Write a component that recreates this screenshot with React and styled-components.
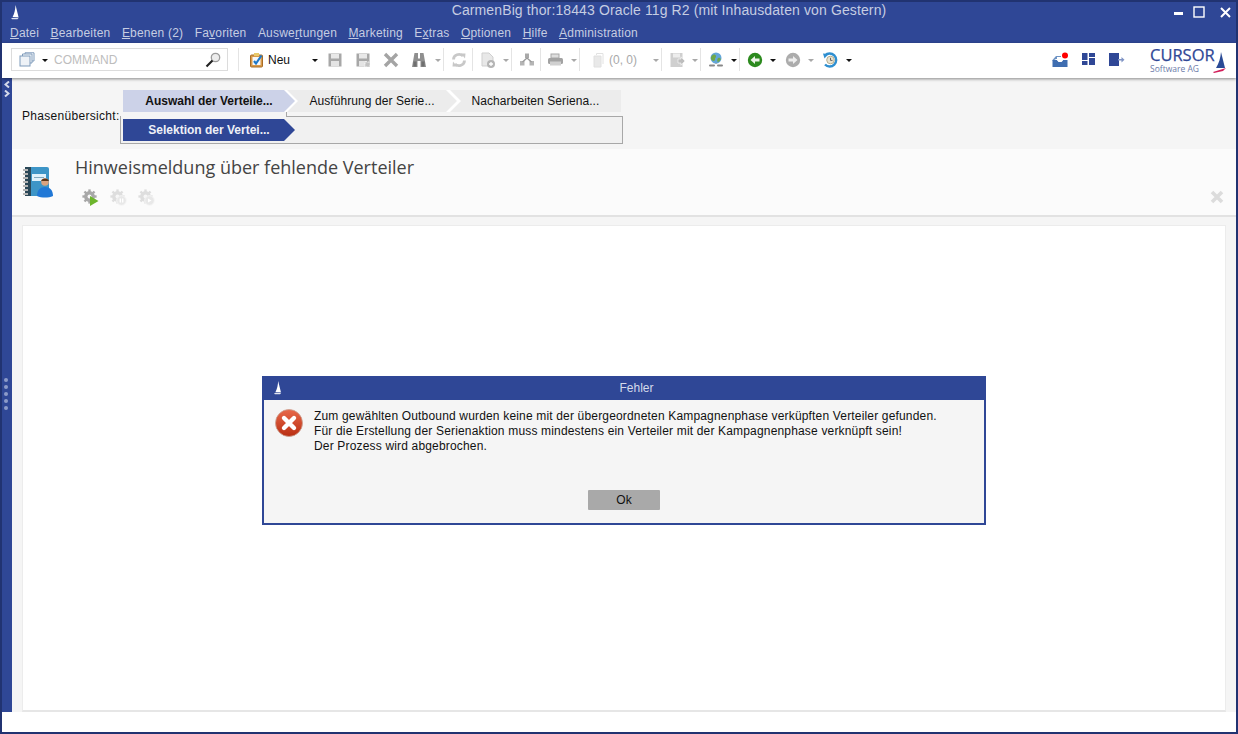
import React from "react";
import styled, { createGlobalStyle } from "styled-components";

const BLUE = "#2f4796";
const Global = createGlobalStyle`
  html, body { margin: 0; padding: 0; background: #fff; }
  body { font-family: "Liberation Sans", Arial, sans-serif; font-size: 12px; color: #111; }
  * { box-sizing: border-box; }
`;
const Frame = styled.div`
  position: relative; width: 1238px; height: 734px; overflow: hidden;
  border: 2px solid #213371; background: #fff; display: flex; flex-direction: column;
`;
const TitleBar = styled.div`
  height: 20px; background: ${BLUE}; display: flex; align-items: center; flex: none; position: relative;
`;
const SailSlot = styled.div`
  width: 26px; padding-left: 8px; display: flex; align-items: center; height: 100%; flex: none;
`;
const TitleText = styled.div`
  flex: 1; text-align: center; color: #c6cde2; font-size: 14px; letter-spacing: 0.12px; padding-left: 136px; padding-bottom: 5px; white-space: nowrap;
`;
const WinControls = styled.div`
  display: flex; align-items: center; padding-right: 5px; flex: none;
`;
const WinSlot = styled.div`
  margin-left: ${p => p.$ml}px; line-height: 0; flex: none;
`;
const MenuBar = styled.div`
  height: 21px; background: ${BLUE}; display: flex; align-items: center; gap: 11.4px; padding-left: 8px; flex: none; color: #c6cde2; font-size: 12px; letter-spacing: 0.2px;
`;
const MenuItem = styled.span``;
const Mn = styled.u``;
const Toolbar = styled.div`
  height: 35px; padding-bottom: 2px; background: #fff; display: flex; align-items: center; flex: none; position: relative; z-index: 2; box-shadow: 0 1px 3px rgba(0,0,0,.45);
`;
const CommandBox = styled.div`
  width: 217px; height: 23px; margin-left: 9px; border: 1px solid #dcdcdc; display: flex; align-items: center; padding-left: 7px; padding-right: 6px; color: #bdbdbd; flex: none;
`;
const CommandLabel = styled.span`
  flex: 1; margin-left: 6px; font-size: 12px;
`;
const Sep = styled.div`
  width: 1px; height: 23px; background: #e4e4e4; flex: none; margin-left: ${p => p.$ml}px;
`;
const Tool = styled.div`
  display: flex; align-items: center; flex: none; margin-left: ${p => p.$ml}px;
`;
const ToolText = styled.span`
  font-size: 12px; color: ${p => p.$muted ? "#a9a9a9" : "#111"}; margin-left: ${p => p.$ml}px;
`;
const Caret = styled.i`
  display: block; width: 0; height: 0; flex: none; margin-left: ${p => p.$ml}px; margin-top: 1px;
  border-left: 3px solid transparent; border-right: 3px solid transparent; border-top: 3px solid ${p => p.$light ? "#a8a8a8" : "#111"};
`;
const Spacer = styled.div`flex: 1;`;
const LogoBox = styled.div`
  width: 78px; margin: 0 8px 0 25px; position: relative; height: 29px; display: flex; flex-direction: column; flex: none;
`;
const LogoMain = styled.span`
  font-family: "Open Sans", sans-serif; font-size: 16.5px; color: ${BLUE}; line-height: 18px; margin-top: 1px; -webkit-text-stroke: .25px ${BLUE};
`;
const LogoSub = styled.span`
  font-family: "Open Sans", sans-serif; font-size: 8.5px; color: #6b7aa9; line-height: 10px;
`;
const LogoSail = styled.svg`
  position: absolute; right: 1px; top: 7px;
`;
const Body = styled.div`
  flex: 1; display: flex; min-height: 0;
`;
const Strip = styled.div`
  width: 10px; background: ${BLUE}; display: flex; flex-direction: column; align-items: center; position: relative; flex: none;
`;
const Chevrons = styled.div`
  padding-top: 3px; color: #d5daea; display: flex; flex-direction: column; gap: 2px;
`;
const GripDots = styled.div`
  position: absolute; top: 300px; display: flex; flex-direction: column; gap: 3px; left: 2px;
`;
const Dot = styled.i`
  display: block; width: 4px; height: 4px; border-radius: 50%; background: #8d9bc9;
`;
const Main = styled.div`
  flex: 1; display: flex; flex-direction: column; min-width: 0;
`;
const PhaseArea = styled.div`
  height: 71px; background: #f5f5f5; flex: none; display: flex; padding: 12px 0 0 10px;
`;
const PhaseLabel = styled.div`
  font-size: 12px; margin-top: 19px; width: 98px; flex: none; white-space: nowrap; letter-spacing: .3px;
`;
const PhaseCol = styled.div`
  display: flex; flex-direction: column; width: 503px; position: relative;
`;
const TabRow = styled.div`
  display: flex; height: 22px; width: 498px; margin-left: 3px; position: relative; z-index: 1; background: #fff;
`;
const Chevron = styled.div`
  height: 22px; width: ${p => p.$w}px; margin-left: ${p => p.$ml || 0}px; flex: none; display: flex; align-items: center; justify-content: center;
  font-size: 12px; background: ${p => p.$bg}; color: ${p => p.$fg}; font-weight: ${p => p.$bold ? 700 : 400}; letter-spacing: ${p => p.$bold ? 0 : 0.08}px;
  clip-path: ${p => p.$first
    ? "polygon(0 0, calc(100% - 11px) 0, 100% 50%, calc(100% - 11px) 100%, 0 100%)"
    : p.$last
      ? "polygon(0 0, 100% 0, 100% 100%, 0 100%, 11px 50%)"
      : "polygon(0 0, calc(100% - 11px) 0, 100% 50%, calc(100% - 11px) 100%, 0 100%, 11px 50%)"};
`;
const SubPanel = styled.div`
  height: 28px; margin-top: 4px; border: 1px solid #a8a8a8; background: #f1f1f1; position: relative; padding: 2px 0 0 2px;
  &::before { content: ""; position: absolute; left: 0; top: -1px; width: 165px; height: 3px; background: #f5f5f5; }
  &::after { content: ""; position: absolute; left: 165px; top: -6px; width: 1px; height: 6px; background: #a8a8a8; }
`;
const SubTab = styled(Chevron)`
  position: relative;
`;
const Header = styled.div`
  height: 68px; background: #fbfbfb; border-bottom: 2px solid #e2e2e2; flex: none; display: flex; position: relative;
`;
const HeaderIcon = styled.div`
  width: 63px; padding: 17px 0 0 10px; flex: none;
`;
const HeaderCol = styled.div`
  flex: 1; display: flex; flex-direction: column;
`;
const Heading = styled.div`
  font-family: "Open Sans", sans-serif; font-size: 18px; color: #444; margin-top: 6px; line-height: 24px;
`;
const HeaderTools = styled.div`
  display: flex; gap: 10px; margin: 10px 0 0 7px;
`;
const CloseMark = styled.div`
  position: absolute; right: 12px; bottom: 11px; line-height: 0;
`;
const Content = styled.div`
  flex: 1; background: #f5f5f5; padding: 8px 10px 0 10px; display: flex; min-height: 0;
`;
const Card = styled.div`
  flex: 1; background: #fff; border: 1px solid #ececec; border-bottom: 2px solid #e6e6e6;
`;
const Footer = styled.div`
  height: 20px; background: #fff; flex: none;
`;
const Dialog = styled.div`
  position: absolute; left: 260px; top: 374px; width: 724px; height: 149px; border: 2px solid ${BLUE}; background: #f5f5f5; z-index: 5; display: flex; flex-direction: column;
`;
const DialogTitle = styled.div`
  height: 22px; background: ${BLUE}; color: #d5daea; font-size: 12px; display: flex; align-items: center; position: relative; justify-content: center; flex: none; padding: 0 0 3px 25px;
`;
const DialogSail = styled.div`
  position: absolute; left: 9px; top: 3px; line-height: 0;
`;
const DialogBody = styled.div`
  display: flex; padding: 9px 0 0 11px; height: 90px; flex: none;
`;
const DialogMessage = styled.div`
  font-size: 12px; line-height: 15px; margin-left: 11px; color: #111; letter-spacing: 0.17px;
`;
const DialogActions = styled.div`
  display: flex; justify-content: center;
`;
const OkButton = styled.button`
  width: 72px; height: 20px; background: #a9a9a9; border: 0; border-radius: 1px; font: 12px "Liberation Sans", Arial, sans-serif; color: #111; padding: 0;
`;

const Sail = ({ h = 15 }) => (
  <svg width={h * 0.66} height={h} viewBox="0 0 10 15">
    <path d="M5.6 0 L8.6 12 L2.6 12 C4.6 8.6 5.4 4 5.6 0Z" fill="#fff" />
    <path d="M1.2 13 L9 12.6 L7.6 14.4 L2 14.4Z" fill="#dfe3f0" />
  </svg>
);
const S = ({ w = 16, h = 16, children }) => <svg width={w} height={h} viewBox={`0 0 ${w} ${h}`}>{children}</svg>;

const IconStack = () => <S><rect x="1" y="4" width="10" height="10" fill="#eef2f7" stroke="#7f9bbb" /><path d="M3.5 4V2H13V11H11M6 2V.8H15V9H13" fill="none" stroke="#7f9bbb" /></S>;
const IconSearch = () => <S><circle cx="10.5" cy="5.5" r="4.2" fill="#ececec" stroke="#9b9b9b" strokeWidth="1.3" /><path d="M7.5 8.5 L1.5 14.5" stroke="#222" strokeWidth="2.2" /></S>;
const IconNeu = () => <S><rect x="1.5" y="3" width="12" height="12" rx="1" fill="#d89a4a" stroke="#a86c25" /><rect x="3.5" y="5" width="8" height="8" fill="#f7f7f7" /><path d="M5 9 L7 11.5 L12.5 3.5" fill="none" stroke="#1e78c8" strokeWidth="2.2" /><rect x="5" y="1" width="5" height="3" fill="#e8c96a" /></S>;
const IconSave = ({ extra }) => <S><path d="M1.5 1.5H14.5V14.5H1.5Z" fill="#a7a7a7" /><rect x="4" y="2" width="8" height="4.5" fill="#e8e8e8" /><rect x="4" y="9" width="8" height="5.5" fill="#e4e4e4" />{extra && <path d="M10 10h5v5h-5z" fill="#c2c2c2" stroke="#fff" strokeWidth=".8" strokeDasharray="1.5 1" />}</S>;
const IconX = () => <S><path d="M2 2 L14 14 M14 2 L2 14" stroke="#a4a4a4" strokeWidth="3.4" /></S>;
const IconBino = () => <S><path d="M3.5 1h3.5v5.5h2V1h3.5l2.5 14H9.5V9h-3v6H1Z" fill="#8f8f8f" /><path d="M2.5 9.5h3v5h-3zM10.5 9.5h3v5h-3z" fill="#6f6f6f" /></S>;
const IconRefresh = () => <S><path d="M2.5 7.5 A5.5 5 0 0 1 12 4 M13.5 8.5 A5.5 5 0 0 1 4 12" fill="none" stroke="#c8c8c8" strokeWidth="2.8" /><path d="M10 1.5 L14.5 1.5 L14 6.5Z M6 14.5 L1.5 14.5 L2 9.5Z" fill="#c8c8c8" /></S>;
const IconDocAdd = () => <S><path d="M2 1h7l4 4v9H2Z" fill="#e8e8e8" stroke="#cfcfcf" /><circle cx="11" cy="12" r="4" fill="#b5b5b5" /><path d="M11 10v4M9 12h4" stroke="#fff" strokeWidth="1.3" /></S>;
const IconNet = () => <S><rect x="6" y="1.5" width="4" height="4.5" fill="#a9a9a9" /><rect x="1" y="9" width="4.5" height="4.5" fill="#b5b5b5" /><rect x="10.5" y="9" width="4.5" height="4.5" fill="#b5b5b5" /><path d="M8 6 L3.5 10 M8 6 L12.5 10" stroke="#9a9a9a" strokeWidth="1.4" /></S>;
const IconPrint = () => <S><rect x="4" y="2" width="8" height="4" fill="#dedede" stroke="#a8a8a8" /><rect x="1" y="6" width="15" height="6" rx="1.5" fill="#a2a2a2" /><rect x="3" y="9.5" width="11" height="4" fill="#d0d0d0" /></S>;
const IconClip = () => <S><path d="M3 4h7v11H3Z" fill="#e9e9e9" stroke="#e0e0e0" /><path d="M5.5 3V1.5H12V12" fill="none" stroke="#e2e2e2" /></S>;
const IconExport = () => <S><rect x="1.5" y="1" width="12" height="14" fill="#cfcfcf" /><rect x="4" y="1.5" width="7" height="4" fill="#ededed" /><path d="M9 7h3V4.8L16 9l-4 4.2V11H9Z" fill="#bdbdbd" stroke="#fff" strokeWidth=".6" /></S>;
const IconGlobe = () => <S><circle cx="8" cy="6" r="5.5" fill="#63a6d9" /><path d="M4 3.5c2-1.5 3.5-1 4 .5s-1.5 2-1 3.5S5 9.5 3.6 8 3 4.5 4 3.5ZM10 6c1.6-.8 2.6 0 2.8 1.2-.6 1.6-2 2.6-3 3C9 9 9 7 10 6Z" fill="#6fa84a" /><path d="M2 13.5h4M10 13.5h4" stroke="#888" strokeWidth="2" strokeLinecap="round" /><path d="M8 11v1" stroke="#888" /></S>;
const IconArrow = () => <S><circle cx="8" cy="8" r="7.2" fill="#2c8a1e" /><path d="M3.5 8 L8 4 V6.4 H12.5 V9.6 H8 V12Z" fill="#eef3ea" /></S>;
const IconArrowR = () => <S><circle cx="8" cy="8" r="7.2" fill="#acacac" /><path d="M12.5 8 L8 4 V6.4 H3.5 V9.6 H8 V12Z" fill="#eee" /></S>;
const IconHistory = () => <S><path d="M3 3.5 A6.5 6.5 0 1 1 3 12.5" fill="none" stroke="#2f8fd0" strokeWidth="2.4" /><path d="M1 1.5 L6.5 2 L2.5 6.5Z" fill="#2f8fd0" /><circle cx="8.5" cy="8" r="3.8" fill="#e8e3d2" stroke="#b9ae8c" /><path d="M8.5 5.8V8.4H10.5" stroke="#666" fill="none" /></S>;
const IconInbox = () => <S><path d="M.5 8 L4 4H9V7H4L.5 9Z" fill="#6d93c4" /><path d="M.5 8H5l1.5 2h3L11 8h4.5v7H.5Z" fill="#3f6db0" /><path d="M5 5h7l3 3H11l-1 1.5H6.5L5 8Z" fill="#fff" /><circle cx="13" cy="3.5" r="3" fill="#f00" /></S>;
const IconGrid = () => <S w={13} h={13}><path d="M0 0h5.5v7H0zM7 0h6v4H7zM7 5h6v7H7zM0 8h5.5v4H0z" fill={BLUE} /></S>;
const IconExit = () => <S><rect x="0" y="1" width="10" height="13" fill={BLUE} /><path d="M9 7h3.5V5l3 2.7-3 2.7V8.4H9Z" fill="#7f93c4" /></S>;
const IconBook = () => (
  <svg width="32" height="32" viewBox="0 0 32 32">
    <rect x="3" y="1" width="24" height="29" rx="2" fill="#3d95c7" />
    <rect x="3" y="1" width="6" height="29" fill="#2a4757" />
    <rect x="10" y="8" width="14" height="7" fill="#dff1fb" />
    <path d="M12 11.5h10" stroke="#7fa9c0" />
    {[3, 7, 11, 15, 19, 23, 27].map(y => <rect key={y} x="1" y={y} width="5" height="2" fill="#b5b5b5" />)}
    <circle cx="23" cy="16" r="3.8" fill="#dca37f" />
    <path d="M19.2 15c0-3.4 7.6-3.4 7.6 0Z" fill="#5c3518" />
    <path d="M15 30c0-6 3.4-9 8-9s8 3 8 9c-4.5 2-11.5 2-16 0Z" fill="#2178d6" />
  </svg>
);
const Gear = ({ active, mode }) => (
  <svg width="18" height="18" viewBox="0 0 18 18">
    <g fill={active ? "#a8a8a8" : "#dedede"}>
      <circle cx="7.5" cy="7.5" r="5.4" />
      {[0, 45, 90, 135, 180, 225, 270, 315].map(a => <rect key={a} x="6.3" y="0.4" width="2.4" height="3" transform={`rotate(${a} 7.5 7.5)`} />)}
    </g>
    <circle cx="7.5" cy="7.5" r="2" fill="#f7f7f7" />
    {active
      ? <path d="M8 7 L16.5 12 L8 17Z" fill="#6db52c" />
      : <g><circle cx="11.5" cy="11.5" r="4.8" fill="#e8e8e8" stroke="#f6f6f6" />{mode === "pause" ? <path d="M10.3 9.5v4M12.7 9.5v4" stroke="#fff" strokeWidth="1.4" /> : <path d="M10 9.5l3.5 2-3.5 2Z" fill="#fff" />}</g>}
  </svg>
);
const ErrorIcon = () => (
  <svg width="28" height="28" viewBox="0 0 28 28">
    <defs><linearGradient id="err" x1="0" y1="0" x2="0" y2="1"><stop offset="0" stopColor="#e8694a" /><stop offset="1" stopColor="#b92e12" /></linearGradient></defs>
    <circle cx="14" cy="14" r="13.5" fill="url(#err)" stroke="#c9a090" strokeWidth=".8" />
    <path d="M9 9 L19 19 M19 9 L9 19" stroke="#fff" strokeWidth="4.4" strokeLinecap="round" />
  </svg>
);
const WinMin = () => <svg width="9" height="12" viewBox="0 0 9 12"><rect x="0" y="6" width="9" height="3" fill="#fff" /></svg>;
const WinMax = () => <svg width="12" height="12" viewBox="0 0 12 12"><rect x="1" y="1" width="10" height="10" fill="none" stroke="#fff" strokeWidth="1.4" /></svg>;
const WinClose = () => <svg width="11" height="11" viewBox="0 0 11 11"><path d="M1 1 L10 10 M10 1 L1 10" stroke="#fff" strokeWidth="2" /></svg>;
const SideChev = ({ left }) => <svg width="6" height="7" viewBox="0 0 6 7"><path d={left ? "M5 0.5 L1.5 3.5 L5 6.5" : "M1 0.5 L4.5 3.5 L1 6.5"} fill="none" stroke="currentColor" strokeWidth="2" /></svg>;

const menus = [
  ["", "D", "atei"], ["", "B", "earbeiten"], ["", "E", "benen (2)"], ["Fa", "v", "oriten"], ["Auswe", "r", "tungen"],
  ["", "M", "arketing"], ["E", "x", "tras"], ["", "O", "ptionen"], ["", "H", "ilfe"], ["", "A", "dministration"],
];

export default function App() {
  return (
    <>
      <Global />
      <Frame>
        <TitleBar>
          <SailSlot><Sail /></SailSlot>
          <TitleText>CarmenBig thor:18443 Oracle 11g R2 (mit Inhausdaten von Gestern)</TitleText>
          <WinControls>
            <WinSlot $ml={0}><WinMin /></WinSlot>
            <WinSlot $ml={10}><WinMax /></WinSlot>
            <WinSlot $ml={15}><WinClose /></WinSlot>
          </WinControls>
        </TitleBar>
        <MenuBar>
          {menus.map(([a, m, b]) => <MenuItem key={m + b}>{a}<Mn>{m}</Mn>{b}</MenuItem>)}
        </MenuBar>
        <Toolbar>
          <CommandBox>
            <IconStack /><Caret $ml={7} />
            <CommandLabel>COMMAND</CommandLabel>
            <IconSearch />
          </CommandBox>
          <Sep $ml={10} />
          <Tool $ml={10}><IconNeu /><ToolText $ml={3}>Neu</ToolText><Caret $ml={22} /></Tool>
          <Tool $ml={9}><IconSave /></Tool>
          <Tool $ml={12}><IconSave extra /></Tool>
          <Tool $ml={12}><IconX /></Tool>
          <Tool $ml={12}><IconBino /><Caret $ml={8} $light /></Tool>
          <Sep $ml={2} />
          <Tool $ml={7}><IconRefresh /></Tool>
          <Sep $ml={5} />
          <Tool $ml={7}><IconDocAdd /><Caret $ml={7} $light /></Tool>
          <Sep $ml={2} />
          <Tool $ml={7}><IconNet /></Tool>
          <Sep $ml={5} />
          <Tool $ml={6}><IconPrint /><Caret $ml={8} $light /></Tool>
          <Sep $ml={2} />
          <Tool $ml={11}><IconClip /><ToolText $ml={2} $muted>(0, 0)</ToolText><Caret $ml={16} $light /></Tool>
          <Sep $ml={2} />
          <Tool $ml={7}><IconExport /><Caret $ml={7} $light /></Tool>
          <Sep $ml={2} />
          <Tool $ml={7}><IconGlobe /><Caret $ml={7} /></Tool>
          <Sep $ml={2} />
          <Tool $ml={7}><IconArrow /><Caret $ml={7} /></Tool>
          <Tool $ml={9}><IconArrowR /><Caret $ml={7} $light /></Tool>
          <Tool $ml={8}><IconHistory /><Caret $ml={8} /></Tool>
          <Spacer />
          <Tool $ml={0}><IconInbox /></Tool>
          <Tool $ml={14}><IconGrid /></Tool>
          <Tool $ml={14}><IconExit /></Tool>
          <LogoBox>
            <LogoMain>CURSOR</LogoMain>
            <LogoSub>Software AG</LogoSub>
            <LogoSail width="14" height="22" viewBox="0 0 14 22">
              <path d="M8 0 L12 16 L3 16 C6 11 7.5 6 8 0Z" fill="#2a4a96" />
              <path d="M0 20 L13 16 L10 19 L1 21Z" fill="#d21f5a" />
            </LogoSail>
          </LogoBox>
        </Toolbar>
        <Body>
          <Strip>
            <Chevrons><SideChev left /><SideChev /></Chevrons>
            <GripDots><Dot /><Dot /><Dot /><Dot /><Dot /></GripDots>
          </Strip>
          <Main>
            <PhaseArea>
              <PhaseLabel>Phasenübersicht:</PhaseLabel>
              <PhaseCol>
                <TabRow>
                  <Chevron $first $bold $w={172} $bg="#ccd2e8" $fg="#111">Auswahl der Verteile...</Chevron>
                  <Chevron $w={170} $ml={-8} $bg="#ececec" $fg="#111">Ausführung der Serie...</Chevron>
                  <Chevron $last $w={171} $ml={-7} $bg="#ececec" $fg="#111">Nacharbeiten Seriena...</Chevron>
                </TabRow>
                <SubPanel>
                  <SubTab $first $bold $w={172} $bg={BLUE} $fg="#eef0f7">Selektion der Vertei...</SubTab>
                </SubPanel>
              </PhaseCol>
            </PhaseArea>
            <Header>
              <HeaderIcon><IconBook /></HeaderIcon>
              <HeaderCol>
                <Heading>Hinweismeldung über fehlende Verteiler</Heading>
                <HeaderTools><Gear active /><Gear mode="pause" /><Gear mode="play" /></HeaderTools>
              </HeaderCol>
              <CloseMark>
                <svg width="14" height="14" viewBox="0 0 14 14"><path d="M2 2 L12 12 M12 2 L2 12" stroke="#dcdcdc" strokeWidth="3.6" /></svg>
              </CloseMark>
            </Header>
            <Content><Card /></Content>
          </Main>
        </Body>
        <Footer />
        <Dialog>
          <DialogTitle>
            <DialogSail><Sail h={14} /></DialogSail>
            Fehler
          </DialogTitle>
          <DialogBody>
            <ErrorIcon />
            <DialogMessage>
              Zum gewählten Outbound wurden keine mit der übergeordneten Kampagnenphase verküpften Verteiler gefunden.<br />
              Für die Erstellung der Serienaktion muss mindestens ein Verteiler mit der Kampagnenphase verknüpft sein!<br />
              Der Prozess wird abgebrochen.
            </DialogMessage>
          </DialogBody>
          <DialogActions><OkButton>Ok</OkButton></DialogActions>
        </Dialog>
      </Frame>
    </>
  );
}
